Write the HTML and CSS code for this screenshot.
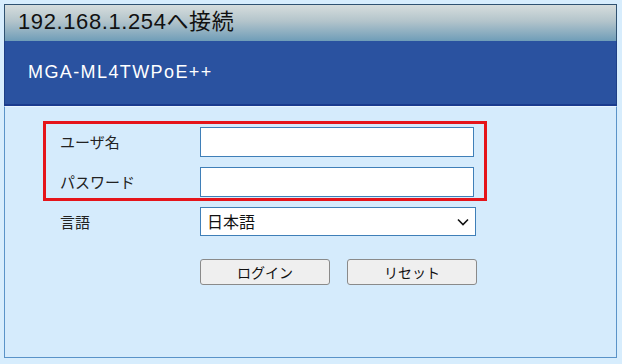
FILE: index.html
```html
<!DOCTYPE html>
<html lang="ja">
<head>
  <meta charset="UTF-8" />
  <title>192.168.1.254へ接続</title>
  <link rel="stylesheet" href="styles.css">
</head>
<body>

<div class="frame">
  <!-- window title -->
  <div class="titlebar">192.168.1.254へ接続</div>

  <!-- product header -->
  <div class="brand">MGA-ML4TWPoE++</div>

  <!-- login form -->
  <form class="content">
    <div class="mark">
      <div class="row">
        <label for="user">ユーザ名</label>
        <input type="text" id="user">
      </div>
      <div class="row">
        <label for="pass">パスワード</label>
        <input type="password" id="pass">
      </div>
    </div>

    <div class="row lang">
      <label for="lang">言語</label>
      <span class="select-wrap">
        <select id="lang">
          <option>日本語</option>
          <option>English</option>
        </select>
        <svg class="chevron" width="12" height="8" viewBox="0 0 12 8">
          <path d="M1 1.5 L6 6.5 L11 1.5" fill="none" stroke="#111" stroke-width="1.6"/>
        </svg>
      </span>
    </div>

    <div class="buttons">
      <button type="button">ログイン</button>
      <button type="reset">リセット</button>
    </div>
  </form>
</div>

</body>
</html>
```

FILE: styles.css
```css
* {
  margin: 0;
  padding: 0;
  box-sizing: border-box;
}

body {
  background: #d7edfd;
  font-family: "Noto Sans CJK JP", "Liberation Sans", sans-serif;
  padding: 4px 0 0 4px;
}

.frame {
  width: 613px;
  height: 354px;
  display: flex;
  flex-direction: column;
}

.titlebar {
  height: 37px;
  background: linear-gradient(#d6dddd, #b3c4cb 45%, #6f9db8);
  border: 1px solid #2f5272;
  border-bottom: none;
  color: #111;
  font-family: "Liberation Sans", "Noto Sans CJK JP", sans-serif;
  font-size: 22px;
  line-height: 33px;
  padding-left: 13px;
  letter-spacing: 0.6px;
}

.brand {
  height: 65px;
  background: #2a52a0;
  border-left: 1px solid #1d3f86;
  border-right: 1px solid #1d3f86;
  border-bottom: 2px solid #1a3b8e;
  color: #fff;
  font-family: "Liberation Sans", sans-serif;
  font-size: 18px;
  letter-spacing: 1.4px;
  line-height: 63px;
  padding-left: 23px;
}

.content {
  flex: 1;
  background: #d5ebfc;
  border: 1px solid #5a93c8;
  border-top: 1px solid #e8f4ff;
  padding: 14px 0 0 38px;
}

.mark {
  width: 444px;
  border: 3px solid #e5141a;
  padding: 3px 0 1px 14px;
  display: flex;
  flex-direction: column;
  gap: 10px;
}

.row {
  display: flex;
  align-items: center;
}

.row label {
  width: 140px;
  font-size: 15px;
  color: #222;
  line-height: 20px;
}

.row input {
  width: 274px;
  height: 30px;
  border: 1px solid #3f7fb8;
  background: #fff;
  outline: none;
}

.lang {
  margin-top: 6px;
  padding-left: 17px;
}

.select-wrap {
  position: relative;
  display: block;
}

.select-wrap select {
  appearance: none;
  -webkit-appearance: none;
  width: 276px;
  height: 29px;
  border: 1px solid #3f7fb8;
  background: #fff;
  font-family: "Noto Sans CJK JP", sans-serif;
  font-size: 16px;
  line-height: 20px;
  color: #111;
  padding: 0 0 2px 6px;
  outline: none;
}

.chevron {
  position: absolute;
  right: 7px;
  top: 11px;
  pointer-events: none;
}

.buttons {
  display: flex;
  gap: 17px;
  margin-top: 23px;
  padding-left: 157px;
}

.buttons button {
  width: 130px;
  height: 26px;
  background: #efefef;
  border: 1px solid #8a8a8a;
  border-radius: 3px;
  font-family: "Noto Sans CJK JP", sans-serif;
  font-size: 14px;
  color: #111;
}
```
